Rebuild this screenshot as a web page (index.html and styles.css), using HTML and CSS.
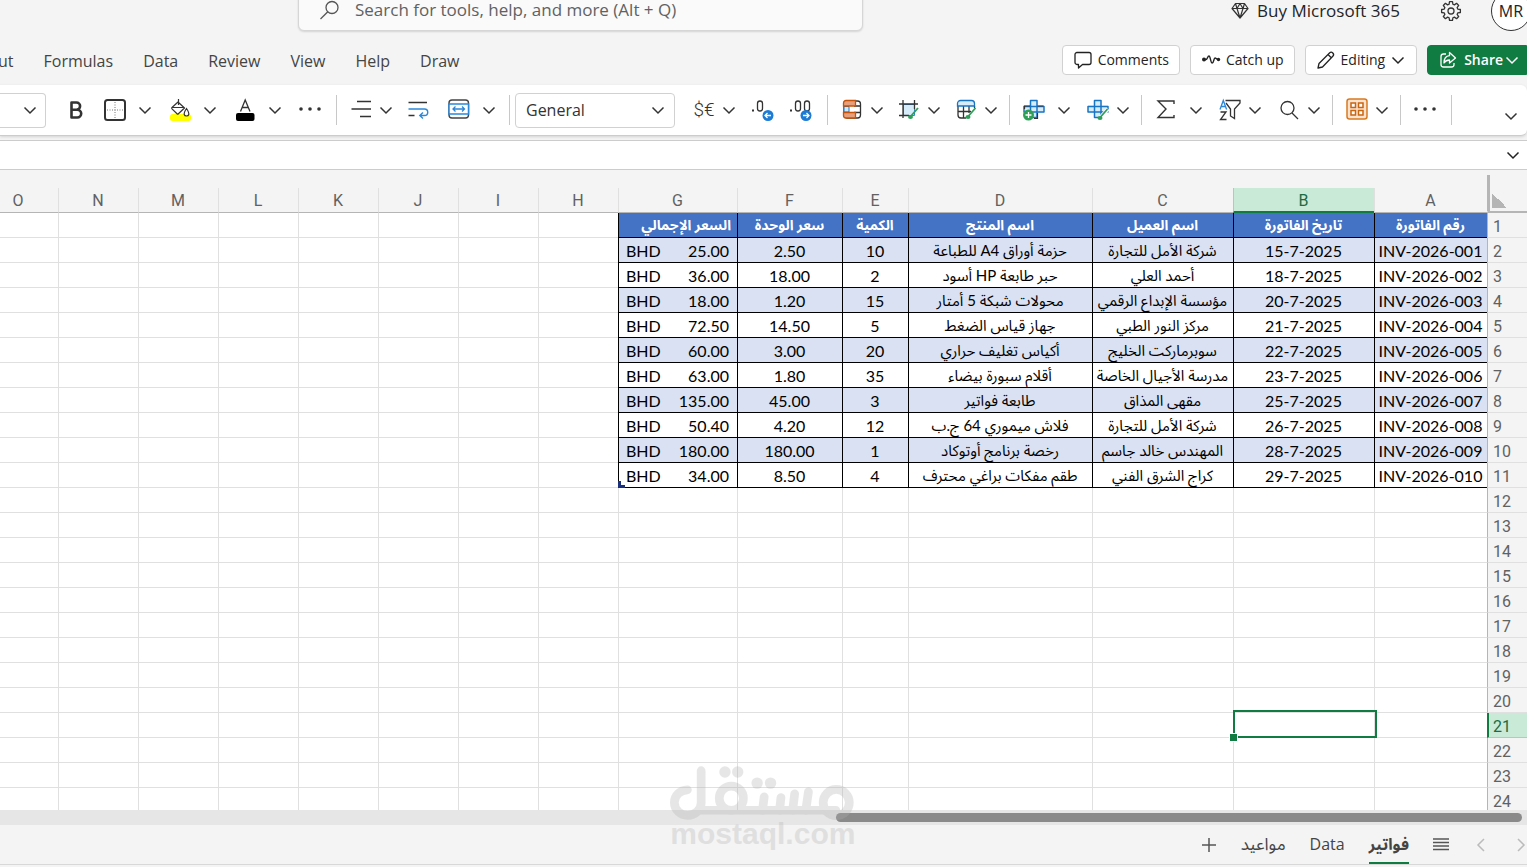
FILE: index.html
```html
<!DOCTYPE html>
<html lang="en">
<head>
<meta charset="utf-8">
<title>Invoices</title>
<link rel="stylesheet" href="styles.css">
</head>
<body>
<svg class="defs" aria-hidden="true">
  <symbol id="chev" viewBox="0 0 16 16"><path d="M2.500 5.500 8 11l5.500-5.500" fill="none" stroke="currentColor" stroke-width="1.500"/></symbol>
  <symbol id="dots" viewBox="0 0 24 24"><g fill="currentColor"><circle cx="3" cy="11" r="1.800"/><circle cx="12" cy="11" r="1.800"/><circle cx="21" cy="11" r="1.800"/></g></symbol>
  <symbol id="cross" viewBox="0 0 24 24"><path d="M8.500 2h7v5.500H22v7h-6.500V20h-7v-5.500H2v-7h6.500z" fill="#d6ecfb"/><path d="M8.500 2.500h6.500v17H8.500zM2 8.500h20v5.500H2z" fill="none" stroke="#1a74c4" stroke-width="1.500" stroke-linejoin="round"/></symbol>
</svg>

<header class="top">
  <label class="search">
    <svg width="22" height="22" viewBox="0 0 22 22"><g fill="none" stroke="#555" stroke-width="1.300"><circle cx="13" cy="8.500" r="6"/><path d="M8.800 12.800 1.500 20"/></g></svg>
    <input type="text" aria-label="Search" placeholder="Search for tools, help, and more (Alt + Q)">
  </label>
  <div class="account">
    <a class="buy" href="#">
      <svg width="20" height="20" viewBox="0 0 20 20"><path d="M5.500 2.500h9L18 7.500 10 17 2 7.500zM2 7.500h16M7 7.500 10 17l3-9.500M5.500 2.500 7 7.500l3-5 3 5 1.500-5" fill="none" stroke="#333" stroke-width="1.200" stroke-linejoin="round"/></svg>
      Buy Microsoft 365</a>
    <button class="plain" aria-label="Settings"><svg width="22" height="22" viewBox="-11 -11 22 22"><g fill="none" stroke="#333" stroke-width="1.300" stroke-linejoin="round"><path d="M6.730-1.930 9.380-1.490V1.490L6.730 1.930 6.120 3.390 7.690 5.580 5.580 7.690 3.390 6.120 1.930 6.730 1.490 9.380H-1.490L-1.930 6.730-3.390 6.120-5.580 7.690-7.690 5.580-6.120 3.390-6.730 1.930-9.380 1.490V-1.490L-6.730-1.930-6.120-3.390-7.690-5.580-5.580-7.690-3.390-6.120-1.930-6.730-1.490-9.380H1.490L1.930-6.730 3.390-6.120 5.580-7.690 7.690-5.580 6.120-3.390z"/><circle r="3"/></g></svg></button>
    <button class="avatar">MR</button>
  </div>
</header>

<div class="menubar">
  <nav class="menu">
    <a href="#">ut</a><a href="#">Formulas</a><a href="#">Data</a><a href="#">Review</a><a href="#">View</a><a href="#">Help</a><a href="#">Draw</a>
  </nav>
  <div class="actions">
    <button class="action"><svg width="20" height="20" viewBox="0 0 20 20"><path d="M4 2.500h12a2 2 0 0 1 2 2v8a2 2 0 0 1-2 2H9.500L5.500 18v-3.500H4a2 2 0 0 1-2-2v-8a2 2 0 0 1 2-2z" fill="none" stroke="#222" stroke-width="1.300" stroke-linejoin="round"/></svg>Comments</button>
    <button class="action"><svg width="20" height="20" viewBox="0 0 20 20"><circle cx="3" cy="9.500" r="2" fill="#222"/><circle cx="17.500" cy="9.500" r="1.700" fill="#222"/><path d="M3 9.500h2c1.500 0 1.500-3.500 3-3.500s1.500 7 3.200 7 1.500-5 2.800-5 1 1.500 3.500 1.500" fill="none" stroke="#222" stroke-width="1.400" stroke-linejoin="round"/></svg>Catch up</button>
    <button class="action"><svg width="20" height="20" viewBox="0 0 20 20"><path d="M2 18l1-4.500L13.500 3a2.300 2.300 0 0 1 3.300 3.300L6.500 17zM12 4.500l3.500 3.500" fill="none" stroke="#222" stroke-width="1.300" stroke-linejoin="round"/></svg>Editing<svg class="chev" width="16" height="16"><use href="#chev"/></svg></button>
    <button class="action share"><svg width="20" height="20" viewBox="0 0 20 20"><path d="M8 4H5.500a2.500 2.500 0 0 0-2.500 2.500v8A2.500 2.500 0 0 0 5.500 17h8a2.500 2.500 0 0 0 2.500-2.500V13M11.500 2.500 17.500 8l-6 5v-3C9 10 7.500 10.700 6 13c0-4 2-7 5.500-7.300z" fill="none" stroke="#fff" stroke-width="1.300" stroke-linejoin="round"/></svg>Share<svg class="chev" width="16" height="16"><use href="#chev"/></svg></button>
  </div>
</div>

<div class="ribbon">
  <button class="size" aria-label="Font size"><svg width="16" height="16"><use href="#chev"/></svg></button>
  <div class="group font">
    <button class="tool" aria-label="Bold"><svg width="24" height="24" viewBox="0 0 24 24"><path d="M7.500 4.500h5a3.600 3.600 0 0 1 0 7.200h-5zm0 7.200h5.800a3.900 3.900 0 0 1 0 7.800H7.500z" fill="none" stroke="#333" stroke-width="2.600" stroke-linejoin="round"/></svg></button>
    <button class="tool wide" aria-label="Borders"><svg width="24" height="24" viewBox="0 0 24 24"><rect x="2" y="2" width="20" height="20" rx="2.500" fill="none" stroke="#333" stroke-width="2"/><path d="M12 4v16M4 12h16" stroke="#777" stroke-width="1" stroke-dasharray="1 1.500"/></svg><svg width="16" height="16"><use href="#chev"/></svg></button>
    <button class="tool wide" aria-label="Fill color"><svg width="24" height="24" viewBox="0 0 24 24"><rect x="2" y="16" width="21" height="7" rx="2.500" fill="#ff0"/><path d="M10.500 1v6M10 4 4 9.500a1 1 0 0 0 0 1.400l5 4.800a1 1 0 0 0 1.400 0L16.500 10zM4.500 9.500H16" fill="none" stroke="#333" stroke-width="1.200" stroke-linejoin="round"/><path d="M18.500 10.500c4 6 2 7.500 0 7.500s-4-1.500 0-7.500z" fill="#fff" stroke="#333" stroke-width="1.200"/></svg><svg width="16" height="16"><use href="#chev"/></svg></button>
    <button class="tool wide" aria-label="Font color"><svg width="24" height="24" viewBox="0 0 24 24"><rect x="3" y="15" width="18.500" height="8" rx="2"/><path d="M7.500 13.500 12.200 2 17 13.500M9.200 9.500h6" fill="none" stroke="#333" stroke-width="1.300"/></svg><svg width="16" height="16"><use href="#chev"/></svg></button>
    <button class="tool" aria-label="More font options"><svg width="24" height="24"><use href="#dots"/></svg></button>
  </div>
  <i class="sep"></i>
  <div class="group align">
    <button class="tool" aria-label="Alignment"><svg width="24" height="24" viewBox="0 0 24 24"><path d="M8 3.500h14M2.500 11h19.500M11 18.500h11" stroke="#333" stroke-width="1.400"/></svg><svg width="16" height="16"><use href="#chev"/></svg></button>
    <button class="tool" aria-label="Wrap text"><svg width="24" height="24" viewBox="0 0 24 24"><path d="M2.500 4.500h18.500M2.500 17.500h6" stroke="#333" stroke-width="1.400"/><path d="M2.500 11h16a3.200 3.200 0 0 1 0 6.500H14m3-3-3.200 3 3.200 3" fill="none" stroke="#2b88d8" stroke-width="1.400"/></svg></button>
    <button class="tool wide merge" aria-label="Merge"><svg width="24" height="24" viewBox="0 0 24 24"><rect x="2" y="2" width="19.500" height="18" rx="3" fill="none" stroke="#444" stroke-width="1.400"/><path d="M2 6h19.500v10H2z" fill="#fff" stroke="#2b88d8" stroke-width="1.500"/><path d="M6 11h11.500M8.500 8.500 6 11l2.500 2.500M15 8.500l2.500 2.500-2.500 2.500" fill="none" stroke="#2b88d8" stroke-width="1.300"/></svg><svg width="16" height="16"><use href="#chev"/></svg></button>
  </div>
  <i class="sep tight"></i>
  <select class="format" aria-label="Number format"><option>General</option></select>
  <div class="group number">
    <button class="tool" aria-label="Currency format"><span class="glyph">$€</span><svg width="16" height="16"><use href="#chev"/></svg></button>
    <button class="tool" aria-label="Decrease decimal"><svg width="24" height="24" viewBox="0 0 24 24"><path d="M1 11.500h2v2H1z" fill="#333"/><rect x="6.500" y="3" width="5" height="10" rx="2.500" fill="none" stroke="#333" stroke-width="1.300"/><circle cx="17" cy="17.500" r="5.500" fill="#1b7bd6"/><path d="M20 17.500h-6m2.500-2.500L14 17.500l2.500 2.500" fill="none" stroke="#fff" stroke-width="1.300"/></svg></button>
    <button class="tool" aria-label="Increase decimal"><svg width="24" height="24" viewBox="0 0 24 24"><path d="M1 11.500h2v2H1z" fill="#333"/><rect x="6.500" y="3" width="5" height="10" rx="2.500" fill="none" stroke="#333" stroke-width="1.300"/><rect x="15.500" y="3" width="5" height="10" rx="2.500" fill="none" stroke="#333" stroke-width="1.300"/><circle cx="17" cy="17.500" r="5.500" fill="#1b7bd6"/><path d="M14 17.500h6m-2.500-2.500 2.500 2.500-2.500 2.500" fill="none" stroke="#fff" stroke-width="1.300"/></svg></button>
  </div>
  <i class="sep"></i>
  <div class="group">
    <button class="tool" aria-label="Conditional formatting"><svg width="24" height="24" viewBox="0 0 24 24"><rect x="4" y="3" width="16.500" height="17" rx="3" fill="#fff" stroke="#333" stroke-width="1.300"/><path d="M14 8h6.500M14 14.500h6.500" stroke="#333" stroke-width="1.300"/><path d="M4 8.500h5v5.500H4z" fill="#cfe8fb" stroke="#1a74c4"/><path d="M6 2.500h9.500V8H3.500V5A2.500 2.500 0 0 1 6 2.500zM3.500 14.500h12v5.500H6a2.500 2.500 0 0 1-2.500-2.500z" fill="#e8a07c" stroke="#c4520a" stroke-width="1.300"/></svg><svg width="16" height="16"><use href="#chev"/></svg></button>
    <button class="tool" aria-label="Format cells"><svg width="24" height="24" viewBox="0 0 24 24"><path d="M6.500 6.500h11v11h-11z" fill="#d6ecfb" stroke="#2b88d8"/><path d="M6 2v18M17.500 2v9M2 6h19M2 17.500h10" stroke="#333" stroke-width="1.300"/><path d="m21 10-7 8" stroke="#2f9e58" stroke-width="1.800"/><ellipse cx="13.500" cy="19" rx="2.500" ry="2" fill="#2f9e58"/></svg><svg width="16" height="16"><use href="#chev"/></svg></button>
    <button class="tool" aria-label="Format as table"><svg width="24" height="24" viewBox="0 0 24 24"><path d="M4 8v9a3 3 0 0 0 3 3h5M4 13.500h13M9.500 8v12M15 8v7M20.500 8v2" fill="none" stroke="#333" stroke-width="1.300"/><path d="M3.500 8V5.500a3 3 0 0 1 3-3h11a3 3 0 0 1 3 3V8z" fill="#d6ecfb" stroke="#1a74c4" stroke-width="1.300"/><path d="m21.500 10-7 8" stroke="#2f9e58" stroke-width="1.800"/><ellipse cx="14" cy="19" rx="2.500" ry="2" fill="#2f9e58"/></svg><svg width="16" height="16"><use href="#chev"/></svg></button>
  </div>
  <i class="sep"></i>
  <div class="group loose">
    <button class="tool wide" aria-label="Insert cells"><svg width="24" height="24" viewBox="0 0 24 24"><use href="#cross" width="24" height="24"/><path d="M2.500 11V8h5.500M21.500 8h-6M12 20.500h3.500V15" fill="none" stroke="#333" stroke-width="1.200"/><circle cx="6.500" cy="17" r="5.500" fill="#2f9e58"/><path d="M6.500 14v6M3.500 17h6" stroke="#fff" stroke-width="1.300"/></svg><svg width="16" height="16"><use href="#chev"/></svg></button>
    <button class="tool" aria-label="Edit cells"><svg width="24" height="24" viewBox="0 0 24 24"><use href="#cross" width="24" height="24"/><path d="m22 11-8 9" stroke="#fff" stroke-width="4"/><path d="m21.500 11-7 8" stroke="#2f9e58" stroke-width="1.800"/><ellipse cx="14" cy="20" rx="2.500" ry="2" fill="#2f9e58"/></svg><svg width="16" height="16"><use href="#chev"/></svg></button>
  </div>
  <i class="sep"></i>
  <div class="group loose">
    <button class="tool wide" aria-label="AutoSum"><svg width="24" height="24" viewBox="0 0 24 24"><path d="M20 6V3H4l8 8-8 8.500h16V17" fill="none" stroke="#333" stroke-width="1.400"/></svg><svg width="16" height="16"><use href="#chev"/></svg></button>
    <button class="tool" aria-label="Sort and filter"><svg width="24" height="24" viewBox="0 0 24 24"><path d="M7.500 2.500H22v2.500l-5.500 6v9.500L12.500 18v-7L8 5" fill="none" stroke="#333" stroke-width="1.300"/><path d="M2 11.500 5.300 2.500 8.600 11.500M3 8.500h4.500" fill="none" stroke="#2b88d8" stroke-width="1.300"/><path d="M2.500 14h5.500l-5.500 7.500H8.500" fill="none" stroke="#333" stroke-width="1.300"/></svg><svg width="16" height="16"><use href="#chev"/></svg></button>
    <button class="tool" aria-label="Find"><svg width="24" height="24" viewBox="0 0 24 24"><circle cx="10.500" cy="10" r="6.500" fill="none" stroke="#333" stroke-width="1.300"/><path d="m15 15 6 6" stroke="#333" stroke-width="1.300"/></svg><svg width="16" height="16"><use href="#chev"/></svg></button>
  </div>
  <i class="sep"></i>
  <div class="group">
    <button class="tool" aria-label="Add-ins"><svg width="24" height="24" viewBox="0 0 24 24"><rect x="2" y="1" width="20" height="20" rx="2.500" fill="#fbe3cf" stroke="#d97a22" stroke-width="1.500"/><g fill="#fff" stroke="#c9640f" stroke-width="1.500"><path d="M6 5h4.500v4.500H6zM13.500 5H18v4.500h-4.500zM6 12.500h4.500V17H6zM13.500 12.500H18V17h-4.500z"/></g></svg><svg width="16" height="16"><use href="#chev"/></svg></button>
  </div>
  <i class="sep"></i>
  <button class="tool more" aria-label="More options"><svg width="24" height="24"><use href="#dots"/></svg></button>
  <i class="sep"></i>
  <button class="tool collapse" aria-label="Ribbon display"><svg width="16" height="16"><use href="#chev"/></svg></button>
</div>

<div class="formula">
  <input type="text" aria-label="Formula bar">
  <button class="tool" aria-label="Expand formula bar"><svg width="16" height="16"><use href="#chev"/></svg></button>
</div>

<main class="sheet" dir="rtl"><table id="grid"></table></main>

<div class="scroll"><div class="thumb"></div></div>

<footer class="tabs">
  <button class="plain" aria-label="New sheet"><svg width="16" height="16" viewBox="0 0 16 16"><path d="M8 1v14M1 8h14" stroke="#555" stroke-width="1.500"/></svg></button>
  <button class="tab large" lang="ar">مواعيد</button>
  <button class="tab">Data</button>
  <button class="tab active" lang="ar">فواتير</button>
  <button class="plain" aria-label="All sheets"><svg width="16" height="16" viewBox="0 0 16 16"><path d="M0 2h16M0 5.500h16M0 9h16M0 12.500h16" stroke="#555" stroke-width="1.300"/></svg></button>
  <button class="plain step" aria-label="Previous"><svg width="16" height="16" viewBox="0 0 16 16"><path d="M11 2 5 8l6 6" fill="none" stroke="#bbb" stroke-width="1.500"/></svg></button>
  <button class="plain step" aria-label="Next"><svg width="16" height="16" viewBox="0 0 16 16"><path d="m5 2 6 6-6 6" fill="none" stroke="#bbb" stroke-width="1.500"/></svg></button>
</footer>

<div class="watermark">
  <svg viewBox="96 45 549 165" aria-hidden="true"><g fill="none" stroke="#b0b0b0" stroke-width="26" stroke-linecap="round"><path d="M189 61v96a40 38 0 1 1-41-39M189 179h402"/><circle cx="279" cy="143" r="36"/><circle cx="592" cy="156" r="39"/><path d="M377 139l-5 40M427 141l-4 38M468 130l-6 49M509 124l-8 55"/></g><g fill="#b0b0b0"><circle cx="260" cy="65" r="17"/><circle cx="298" cy="65" r="17"/><circle cx="356" cy="98" r="17"/><circle cx="396" cy="98" r="17"/></g></svg>
  <span>mostaql.com</span>
</div>
<script src="sheet.js"></script>
</body>
</html>
```
FILE: styles.css
```css
* { box-sizing: border-box; }
html, body { height: 100%; }
body {
  margin: 0;
  display: flex;
  flex-direction: column;
  overflow: hidden;
  background: #f4f4f4;
  color: #444;
  font: 16px/24px "Open Sans", "Noto Sans", sans-serif;
}
button, input, select { font: inherit; color: inherit; }
button { background: none; border: 0; padding: 0; }
a { color: inherit; text-decoration: none; }
svg { display: block; flex: none; }
.defs { position: absolute; width: 0; height: 0; }

/* title bar */
.top { display: flex; align-items: flex-start; height: 40px; flex: none; }
.search {
  display: flex; align-items: center; gap: 14px;
  width: 37%; height: 42px; margin: -11px 0 0 298px; padding: 0 20px;
  background: #fafafa; border: 1px solid #d6d6d6; border-radius: 6px;
  box-shadow: 0 1px 2px #0002; font-size: 17px;
}
.search input { flex: 1; min-width: 0; border: 0; padding: 0; background: none; }
.search input::placeholder { color: #616161; opacity: 1; }
.account { display: flex; align-items: center; margin: -11px -4px 0 auto; height: 44px; color: #242424; }
.buy { display: flex; align-items: center; gap: 7px; margin-right: 40px; font-size: 17px; }
.avatar { width: 40px; height: 40px; margin-left: 29px; border: 1px solid #333; border-radius: 50%; background: #fff; }

/* menu row */
.menubar { display: flex; align-items: center; justify-content: space-between; height: 45px; padding-bottom: 5px; flex: none; }
.menu { display: flex; gap: 30px; margin-left: -2px; padding-top: 1px; }
.actions { display: flex; gap: 10px; }
.action {
  display: flex; align-items: center; gap: 5px; height: 30px; padding: 0 10px;
  font-size: 14px; color: #242424; background: #fff; border: 1px solid #d1d1d1; border-radius: 4px;
}
.share { padding-right: 6px; gap: 6px; color: #fff; background: #107c41; border-color: #107c41; border-radius: 4px 0 0 4px; font-weight: 600; }
.share .chev { margin-left: -5px; }

/* ribbon */
.ribbon {
  display: flex; align-items: center; height: 51px; flex: none;
  background: #fff; border-bottom: 1px solid #ccc; border-radius: 0 6px 6px 0; color: #333;
  box-shadow: 0 1px 3px #0002;
}
.size { width: 46px; height: 35px; padding-left: 22px; border: 1px solid #d1d1d1; border-left: 0; border-radius: 0 4px 4px 0; }
.group { display: flex; align-items: center; gap: 12px; }
.font { gap: 15px; margin-left: 18px; padding-right: 4px; }
.align { padding-right: 2px; }
.number { margin-left: 17px; padding-right: 4px; gap: 14px; }
.loose { gap: 14px; }
.tool { display: flex; align-items: center; gap: 5px; }
.wide { gap: 10px; }
.merge { margin-left: 5px; }
.more { margin-right: 4px; }
.sep { width: 1px; height: 30px; margin: 0 12px 0 10px; background: #c8c8c8; flex: none; }
.tight { margin-right: 5px; }
.glyph { width: 24px; font-family: Roboto, sans-serif; font-size: 19px; font-weight: 300; }
.format {
  appearance: none; width: 160px; height: 35px; padding: 0 10px; color: #333;
  border: 1px solid #d1d1d1; border-radius: 4px;
  background: #fff url("data:image/svg+xml,%3Csvg xmlns='http://www.w3.org/2000/svg' width='16' height='16'%3E%3Cpath d='M2.500 5.500 8 11l5.500-5.500' fill='none' stroke='%23333' stroke-width='1.500'/%3E%3C/svg%3E") no-repeat right 8px center;
}
.collapse { margin: 12px 8px 0 auto; }

/* formula bar */
.formula { display: flex; align-items: center; height: 30px; flex: none; margin-top: 4px; padding-right: 6px; background: #fff; border: solid #ccc; border-width: 1px 0; color: #222; }
.formula input { flex: 1; border: 0; background: none; outline: 0; }

/* grid */
.sheet {
  flex: 1; min-height: 0; overflow: hidden; padding-top: 18px;
  font-family: Lato, "Noto Sans Arabic", "Noto Sans", sans-serif;
}
#grid { table-layout: fixed; border-collapse: separate; border-spacing: 0; color: #000; line-height: 20px; }
#grid th, #grid td { height: 25px; padding: 2px 1px 0 0; border: solid #e0e0e0; border-width: 0 0 1px 1px; white-space: nowrap; text-align: center; }
#grid td { background: #fff; }
#grid th { background: #f4f4f4; color: #616161; font-family: Roboto, sans-serif; font-weight: 400; }
#grid thead th { border-bottom-color: #b5b5b5; }
#grid thead .on { padding-top: 3px; background: #c9ead7; border-color: #9fd5b7; border-bottom: 2px solid #107c41; color: #1c6b43; }
#grid tbody th { border-left-color: #b5b5b5; text-align: left; padding: 4px 0 0 5px; }
#grid tbody .on { background: #c9ead7; border-color: #9fd5b7; border-left: 2px solid #107c41; color: #1c6b43; padding-left: 4px; }
#grid .corner { position: relative; border-bottom: 2px solid #b5b5b5; }
.corner::before { content: ""; position: absolute; left: -1px; top: -13px; bottom: 0; width: 3px; background: #b5b5b5; }
.corner::after { content: ""; position: absolute; left: 4px; bottom: 3px; width: 15px; height: 15px; background: linear-gradient(to top right, #b5b5b5 50%, transparent 50%); }
#grid .data { border-color: #000; }
#grid .arabic { padding: 0 1px 0 0; font-size: 15px; }
#grid .band { background: #d9e1f2; }
#grid .title { background: #4472c4; color: #fff; font-weight: 700; font-size: 14px; padding: 0 1px 0 0; }
#grid .edge { text-align: right; padding-right: 6px; }
.money { display: flex; justify-content: space-between; padding: 0 7px 0 7px; }
#grid .last { position: relative; }
.last::after { content: ""; position: absolute; left: -1px; bottom: -1px; width: 7px; height: 7px; background: #1b2f7c; clip-path: polygon(0 0, 3px 0, 3px 4px, 7px 4px, 7px 7px, 0 7px); }
#grid .selected { position: relative; }
.selected::before { content: ""; position: absolute; left: -1px; right: -3px; top: -3px; bottom: -1px; border: 2px solid #107c41; }
.selected::after { content: ""; position: absolute; left: -5px; bottom: -5px; width: 7px; height: 7px; border: 1px solid #fff; background: #107c41; }

/* bottom */
.scroll { height: 15px; padding: 3px 5px; background: #e6e6e6; flex: none; }
.thumb { width: 45.2%; height: 9px; margin-left: auto; border-radius: 5px; background: #8a8a8a; }
.tabs { display: flex; align-items: stretch; justify-content: flex-end; gap: 24px; height: 40px; margin-bottom: 2px; flex: none; border-bottom: 1px solid #d8d8d8; overflow: hidden; }
.tab { border: solid transparent; border-width: 0 0 2px; font-family: "Open Sans", "Noto Sans Arabic", "Noto Sans", sans-serif; }
.large { font-size: 17px; }
.active { border-color: #107c41; font-weight: 700; }
.step:last-child { margin-right: -2px; }
.watermark {
  position: absolute; left: 43.9%; bottom: 20px; width: 184px; opacity: .3; pointer-events: none;
  color: #b0b0b0; font: 700 30px/26px "Liberation Sans", sans-serif;
}
.watermark svg { width: 184px; height: 56px; }
```
FILE: sheet.js
```js
const columns = [
  ["A", 113], ["B", 141], ["C", 141], ["D", 184], ["E", 66], ["F", 105], ["G", 119],
  ["H", 80], ["I", 80], ["J", 80], ["K", 80], ["L", 80], ["M", 80], ["N", 80], ["O", 80]
];
const rows = [
  ["رقم الفاتورة", "تاريخ الفاتورة", "اسم العميل", "اسم المنتج", "الكمية", "سعر الوحدة", "السعر الإجمالي"],
  ["INV-2026-001", "15-7-2025", "شركة الأمل للتجارة", "حزمة أوراق A4 للطباعة", "10", "2.50", "25.00"],
  ["INV-2026-002", "18-7-2025", "أحمد العلي", "حبر طابعة HP أسود", "2", "18.00", "36.00"],
  ["INV-2026-003", "20-7-2025", "مؤسسة الإبداع الرقمي", "محولات شبكة 5 أمتار", "15", "1.20", "18.00"],
  ["INV-2026-004", "21-7-2025", "مركز النور الطبي", "جهاز قياس الضغط", "5", "14.50", "72.50"],
  ["INV-2026-005", "22-7-2025", "سوبرماركت الخليج", "أكياس تغليف حراري", "20", "3.00", "60.00"],
  ["INV-2026-006", "23-7-2025", "مدرسة الأجيال الخاصة", "أقلام سبورة بيضاء", "35", "1.80", "63.00"],
  ["INV-2026-007", "25-7-2025", "مقهى المذاق", "طابعة فواتير", "3", "45.00", "135.00"],
  ["INV-2026-008", "26-7-2025", "شركة الأمل للتجارة", "فلاش ميموري 64 ج.ب", "12", "4.20", "50.40"],
  ["INV-2026-009", "28-7-2025", "المهندس خالد جاسم", "رخصة برنامج أوتوكاد", "1", "180.00", "180.00"],
  ["INV-2026-010", "29-7-2025", "كراج الشرق الفني", "طقم مفكات براغي محترف", "4", "8.50", "34.00"]
];

const total = 40 + columns.reduce((sum, c) => sum + c[1], 0);
let html = '<colgroup><col style="width:40px">' +
  columns.map(c => `<col style="width:${c[1]}px">`).join("") + "</colgroup>" +
  '<thead><tr><th class="corner"></th>' +
  columns.map(c => `<th scope="col"${c[0] === "B" ? ' class="on"' : ""}>${c[0]}</th>`).join("") +
  "</tr></thead><tbody>";

for (let r = 1; r <= 24; r++) {
  html += `<tr><th scope="row"${r === 21 ? ' class="on"' : ""}>${r}</th>`;
  columns.forEach((col, c) => {
    const row = rows[r - 1];
    const value = row && row[c];
    const cls = [];
    let content = "";
    if (value) {
      cls.push("data");
      if (r === 1) cls.push("title");
      else if (r % 2 === 0) cls.push("band");
      if (r > 1 && (c === 2 || c === 3)) cls.push("arabic");
      if (r === 1 && c === 6) cls.push("edge");
      if (r === 11 && c === 6) cls.push("last");
      content = r > 1 && c === 6
        ? `<div class="money" dir="ltr"><span>BHD</span><span>${value}</span></div>`
        : c < 2 && r > 1 ? `<bdi dir="ltr">${value}</bdi>` : value;
    }
    if (r === 21 && c === 1) cls.push("selected");
    html += `<td${cls.length ? ` class="${cls.join(" ")}"` : ""}>${content}</td>`;
  });
  html += "</tr>";
}
const grid = document.getElementById("grid");
grid.style.width = total + "px";
grid.innerHTML = html + "</tbody>";
```
